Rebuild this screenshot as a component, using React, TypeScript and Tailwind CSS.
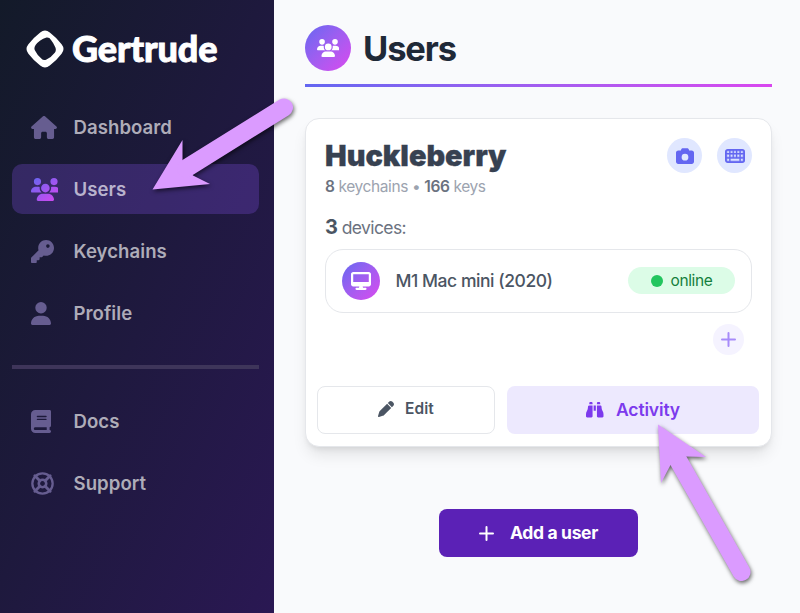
import React from "react";
import { FaHouse, FaUsers, FaKey, FaUser, FaBook, FaCamera, FaDesktop, FaPen, FaBinoculars } from "react-icons/fa6";

function NavItem({
  icon,
  label,
  active = false,
}: {
  icon: React.ReactNode;
  label: string;
  active?: boolean;
}) {
  return (
    <a
      className={
        active
          ? "flex h-[50px] items-center rounded-[10px] bg-[#7c4ddb]/30 pl-[19px]"
          : "flex h-[50px] items-center pl-[19px]"
      }
    >
      <span className="flex w-[42.5px] text-[#665d90]">{icon}</span>
      <span
        className={
          active
            ? "pt-[2px] text-[18.6px] font-semibold tracking-[0.05px] text-[#b9b3cd]"
            : "pt-[2px] text-[18.6px] font-semibold tracking-[0.05px] text-[#aeacb8]"
        }
      >
        {label}
      </span>
    </a>
  );
}

function Plus({ className }: { className: string }) {
  return (
    <svg viewBox="0 0 15 15" className={className} fill="none" stroke="currentColor" strokeWidth="2" strokeLinecap="round">
      <path d="M7.5 1v13M1 7.5h13" />
    </svg>
  );
}

function LifeRing() {
  return (
    <svg viewBox="0 0 24 24" className="size-[23px]" fill="none" stroke="currentColor">
      <circle cx="12" cy="12" r="10.6" strokeWidth="2.4" />
      <circle cx="12" cy="12" r="3.9" strokeWidth="2.7" />
      <path
        d="M4 4l5.200 5.200M20 4l-5.200 5.200M4 20l5.200-5.200M20 20l-5.200-5.200"
        strokeWidth="3"
        strokeLinecap="round"
      />
    </svg>
  );
}

function Keyboard() {
  return (
    <svg viewBox="0 0 20 14" className="h-[14px] w-[20px]">
      <rect x="0.9" y="0.9" width="18.2" height="12.2" rx="1.8" fill="#a5adf8" stroke="#6366f1" strokeWidth="1.8" />
      <path
        d="M1 4.6h18M1 8.8h18M4.9 1v12M8.2 1v7.8M11.6 1v7.8M15.1 1v12"
        stroke="#6366f1"
        strokeWidth="1.2"
      />
      <path
        d="M2.4 2.4h1.6v1.4h-1.6zM5.8 2.4h1.5v1.4h-1.5zM9.2 2.4h1.5v1.4h-1.5zM12.6 2.4h1.5v1.4h-1.5zM16 2.4h1.5v1.4h-1.5zM2.4 5.9h1.6v1.7h-1.6zM5.8 5.9h1.5v1.7h-1.5zM9.2 5.9h1.5v1.7h-1.5zM12.6 5.9h1.5v1.7h-1.5zM16 5.9h1.5v1.7h-1.5zM2.4 9.9h1.6v1.5h-1.6zM5.8 9.9h8.3v1.5h-8.3zM16 9.9h1.5v1.5h-1.5z"
        fill="#dbe2ff"
      />
    </svg>
  );
}

function Arrow({ className, points, shaft }: { className: string; points: string; shaft: number[] }) {
  return (
    <svg className={className} width="800" height="613" viewBox="0 0 800 613">
      <g className="drop-shadow-[1px_2px_2px_rgba(0,0,0,0.6)]">
        <polygon points={points} fill="#db9bff" />
        <line x1={shaft[0]} y1={shaft[1]} x2={shaft[2]} y2={shaft[3]} stroke="#db9bff" strokeWidth="18" strokeLinecap="round" />
      </g>
    </svg>
  );
}

export default function App() {
  return (
    <div className="relative flex h-[613px] w-[800px] overflow-hidden bg-[#f9fafc] font-['Inter',sans-serif]">
      <aside className="w-[274px] shrink-0 bg-linear-to-br/srgb from-[#131a29] to-[#2a1853] px-3">
        <div className="flex h-[98px] items-center pl-[14px]">
          <svg width="38" height="38" viewBox="0 0 38 38">
            <path
              fill="#fff"
              fillRule="evenodd"
              d="M14.2 2.4 Q19 -1.4 23.8 2.4 Q30.5 7.5 35.6 14.2 Q39.4 19 35.6 23.8 Q30.5 30.5 23.8 35.6 Q19 39.4 14.2 35.6 Q7.5 30.5 2.4 23.8 Q-1.4 19 2.4 14.2 Q7.5 7.5 14.2 2.4Z M20.5 7.6 Q23.5 7.2 25 10 Q27.5 13 29.3 17.2 Q30.5 20 29 22.5 Q25.5 27 20.5 29.6 Q17.5 31 15.3 28.6 Q11.5 25.5 9 20.5 Q7.6 17.8 9.6 15 Q13.5 10 20.5 7.6Z"
            />
          </svg>
          <span className="mb-[2px] ml-[8px] font-['Lato',sans-serif] text-[36px] leading-none font-black tracking-[-0.1px] text-white [-webkit-text-stroke:0.9px_white]">
            Gertrude
          </span>
        </div>
        <nav className="mt-1 flex w-[247px] flex-col gap-[12px]">
          <NavItem icon={<FaHouse className="h-[23px] w-[26px]" />} label="Dashboard" />
          <NavItem
            active
            icon={
              <>
                <svg width="0" height="0" className="absolute">
                  <defs>
                    <linearGradient id="fade" x1="0" y1="0" x2="1" y2="1">
                      <stop offset="0" stopColor="#6366f1" />
                      <stop offset="1" stopColor="#d946ef" />
                    </linearGradient>
                  </defs>
                </svg>
                <span className="flex w-[27px] overflow-hidden">
                  <FaUsers className="h-[23px] w-[28.75px] shrink-0 fill-[url(#fade)]" />
                </span>
              </>
            }
            label="Users"
          />
          <NavItem icon={<FaKey className="size-[23px]" />} label="Keychains" />
          <NavItem icon={<FaUser className="h-[23px] w-[20px]" />} label="Profile" />
        </nav>
        <div className="mt-[27px] h-1 w-[247px] bg-[#3e355a]" />
        <nav className="mt-[27px] flex w-[247px] flex-col gap-[12px]">
          <NavItem icon={<FaBook className="h-[23px] w-[20px]" />} label="Docs" />
          <NavItem icon={<LifeRing />} label="Support" />
        </nav>
      </aside>

      <main className="flex flex-1 flex-col pr-7 pl-[31px]">
        <header className="mt-[25px] flex h-[46px] items-center">
          <div className="flex size-[46px] items-center justify-center rounded-full bg-linear-to-br from-[#6366f1] to-[#d946ef] text-white">
            <FaUsers className="h-[18px] w-[22.5px]" />
          </div>
          <h1 className="mt-[2px] ml-3 text-[34.5px] font-bold tracking-[-1.1px] text-[#1f2937]">Users</h1>
        </header>
        <div className="mt-[13px] h-[3px] bg-linear-to-r from-[#6366f1] to-[#d946ef]" />

        <section className="mt-[31px] flex h-[329px] flex-col rounded-[14px] border border-[#e5e7eb] bg-white shadow-[0_10px_16px_-3px_rgba(0,0,0,0.1),0_4px_6px_-3px_rgba(0,0,0,0.1)]">
          <div className="flex justify-between px-[19px] pt-[19px]">
            <div>
              <h2 className="text-[28.9px] leading-[36px] font-black text-[#374151] [-webkit-text-stroke:0.3px_#374151]">
                Huckleberry
              </h2>
              <p className="mt-px text-[15.5px] leading-[23px] tracking-[-0.4px] text-[#9ca3af]">
                <b className="font-semibold text-[#6b7280]">8</b> keychains <span>•</span>{" "}
                <b className="font-semibold text-[#6b7280]">166</b> keys
              </p>
            </div>
            <div className="flex gap-[15px] text-[18px] text-[#6366f1]">
              <div className="flex size-[35px] items-center justify-center rounded-full bg-[#e0e7ff]">
                <FaCamera />
              </div>
              <div className="flex size-[35px] items-center justify-center rounded-full bg-[#e0e7ff]">
                <Keyboard />
              </div>
            </div>
          </div>
          <p className="mt-[15px] pl-[19px] text-[17.5px] leading-[28px] tracking-[-0.6px] text-[#6b7280]">
            <b className="text-[20px] font-bold text-[#4b5563]">3</b> devices:
          </p>
          <div className="mx-[19px] mt-[7px] flex h-[64px] items-center rounded-[18px] border border-[#e5e7eb] px-4 pb-px">
            <div className="flex size-[38px] items-center justify-center rounded-full bg-linear-to-br from-[#6366f1] to-[#d946ef] text-white">
              <FaDesktop className="h-[18px] w-[20px]" />
            </div>
            <span className="mt-[2px] ml-[15.5px] text-[17.5px] font-medium tracking-[-0.45px] text-[#4b5563]">
              M1 Mac mini (2020)
            </span>
            <div className="ml-auto flex h-[27px] w-[107px] items-center justify-center rounded-full bg-[#dcfce7] text-[15.5px] tracking-[-0.4px] text-[#15803d]">
              <span className="mr-2 size-3 rounded-full bg-[#22c55e]" />
              <span className="pt-px">online</span>
            </div>
          </div>
          <div className="mt-[11px] mr-[27px] flex size-[31px] items-center justify-center self-end rounded-full bg-[#f5f3ff] text-[#a78bfa]">
            <Plus className="size-[15px]" />
          </div>
          <div className="mt-[31px] ml-[11px] flex gap-[12px]">
            <button className="flex h-12 w-[178px] items-center justify-center rounded-[8px] border border-[#e5e7eb] pb-[3px] text-[15.5px] font-semibold tracking-[0.05px] text-[#4b5563]">
              <FaPen className="mr-[11px] text-[16px]" />
              Edit
            </button>
            <button className="flex h-12 w-[252px] items-center justify-center rounded-[8px] bg-[#ede9fe] text-[17.5px] font-semibold tracking-[-0.15px] text-[#7c3aed]">
              <FaBinoculars className="mr-[12.5px] text-[17.5px]" />
              Activity
            </button>
          </div>
        </section>

        <button className="mt-[62px] flex h-12 w-[199px] items-center justify-center self-center rounded-[8px] bg-[#5b21b6] text-[17.5px] font-bold tracking-[-0.35px] text-white">
          <Plus className="mr-4 size-[15px]" />
          Add a user
        </button>
      </main>

      <Arrow
        className="pointer-events-none absolute inset-0"
        points="152.5,189.5 182.5,140 182.5,161 193,175.5 210,184"
        shaft={[186, 168.5, 284, 107.5]}
      />
      <Arrow
        className="pointer-events-none absolute inset-0"
        points="658,424.5 706,457 686,456.5 670.5,465 661,483"
        shaft={[678, 460, 741.5, 572]}
      />
    </div>
  );
}
